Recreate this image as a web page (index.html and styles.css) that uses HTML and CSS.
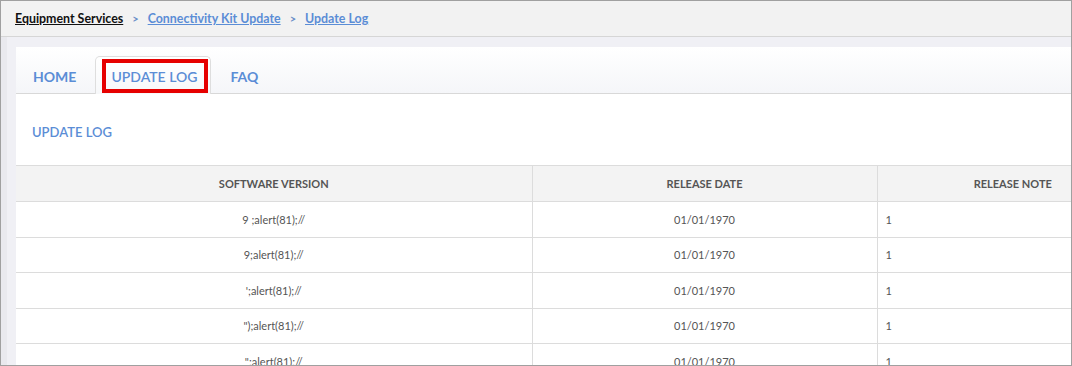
FILE: index.html
```html
<!DOCTYPE html>
<html lang="en">
<head>
  <meta charset="UTF-8" />
  <meta name="viewport" content="width=device-width, initial-scale=1.0"/>
  <title>Update Log</title>
  <link rel="stylesheet" href="styles.css">
</head>
<body>
  <div class="frame">
    <div class="crumbs">
      <a href="#" class="crumb-root">Equipment Services</a>
      <span class="sep">&gt;</span>
      <a href="#">Connectivity Kit Update</a>
      <span class="sep">&gt;</span>
      <a href="#">Update Log</a>
    </div>

    <div class="page">
      <div class="panel">
        <ul class="tabs">
          <li class="tab"><a href="#">HOME</a></li>
          <li class="tab active"><a href="#">UPDATE LOG</a></li>
          <li class="tab"><a href="#">FAQ</a></li>
        </ul>

        <div class="content">
          <h2>UPDATE LOG</h2>
          <table class="log">
            <thead>
              <tr>
                <th class="col-version">SOFTWARE VERSION</th>
                <th class="col-date">RELEASE DATE</th>
                <th class="col-note">RELEASE NOTE</th>
              </tr>
            </thead>
            <tbody id="rows"></tbody>
          </table>
        </div>
      </div>
    </div>
  </div>

  <script>
    const versions = ["9 ;alert(81);//", "9;alert(81);//", "';alert(81);//", "\");alert(81);//", "\";alert(81);//"];
    const tbody = document.getElementById("rows");

    versions.forEach(v => {
      const tr = document.createElement("tr");
      const tdV = document.createElement("td");
      tdV.className = "center";
      tdV.textContent = v;
      const tdD = document.createElement("td");
      tdD.className = "center";
      tdD.textContent = "01/01/1970";
      const tdN = document.createElement("td");
      tdN.textContent = "1";
      tr.append(tdV, tdD, tdN);
      tbody.appendChild(tr);
    });
  </script>
</body>
</html>
```

FILE: styles.css
```css
:root {
  --azul: #5b8dd6;
  --borda: #dcdcdc;
  --texto: #555;
}

* {
  box-sizing: border-box;
}

body {
  margin: 0;
  font-family: Lato, 'Open Sans', sans-serif;
  color: var(--texto);
  background: #fff;
}

.frame {
  width: 1072px;
  height: 366px;
  border: 1px solid #a0a0a0;
  overflow: hidden;
  background: #f0f0f5;
}

.crumbs {
  height: 36px;
  padding: 0 14px;
  display: flex;
  align-items: center;
  gap: 8px;
  background: #f2f2f2;
  border-bottom: 1px solid #d6d6d6;
  font-size: 12.4px;
  font-weight: bold;
}

.crumbs a {
  color: var(--azul);
  text-decoration: underline;
}

.crumbs a.crumb-root {
  color: #111;
}

.sep {
  color: #6a8fc8;
  font-size: 11px;
  padding: 0 1px;
}

.page {
  height: 100%;
  padding: 10px 0 0 9px;
  border-left: 6px solid #e9e9ee;
}

.panel {
  background: #fff;
  height: 100%;
}

.tabs {
  list-style: none;
  margin: 0;
  padding: 0 0 0 1px;
  height: 47px;
  display: flex;
  align-items: flex-end;
  gap: 3px;
  border-bottom: 1px solid #d8d8d8;
  background: linear-gradient(#fff, #f5f6f9);
}

.tab {
  height: 37px;
  margin-bottom: -1px;
  padding: 0 15px;
  border: 1px solid transparent;
  border-bottom: none;
  border-radius: 5px 5px 0 0;
  display: flex;
  align-items: center;
}

.tab a {
  color: var(--azul);
  text-decoration: none;
  font-size: 14px;
  font-weight: bold;
}

.tab.active {
  height: 38px;
  padding: 1px 2px 0 6px;
  border-color: #dedede;
  background: linear-gradient(#fff, #f7f8fa);
}

.tab.active a {
  display: flex;
  align-items: center;
  height: 34px;
  padding: 0 7px 0 5px;
  border: 4px solid #e60000;
  font-weight: 600;
}

.content {
  padding-top: 29px;
}

.content h2 {
  margin: 0 0 24px 16px;
  font-size: 13px;
  font-weight: 600;
  color: var(--azul);
  line-height: 18px;
}

.log {
  width: 1133px;
  border-collapse: collapse;
  font-size: 11px;
}

.log th {
  height: 36px;
  background: #f3f3f3;
  font-weight: bold;
  color: #555;
  border: 1px solid var(--borda);
  border-left: none;
}

.log td {
  height: 35.5px;
  padding: 0 8px;
  border: 1px solid var(--borda);
  border-left: none;
  color: #555;
}

.log .center {
  text-align: center;
}

.col-version {
  width: 516px;
}

.col-date {
  width: 345px;
}
```
